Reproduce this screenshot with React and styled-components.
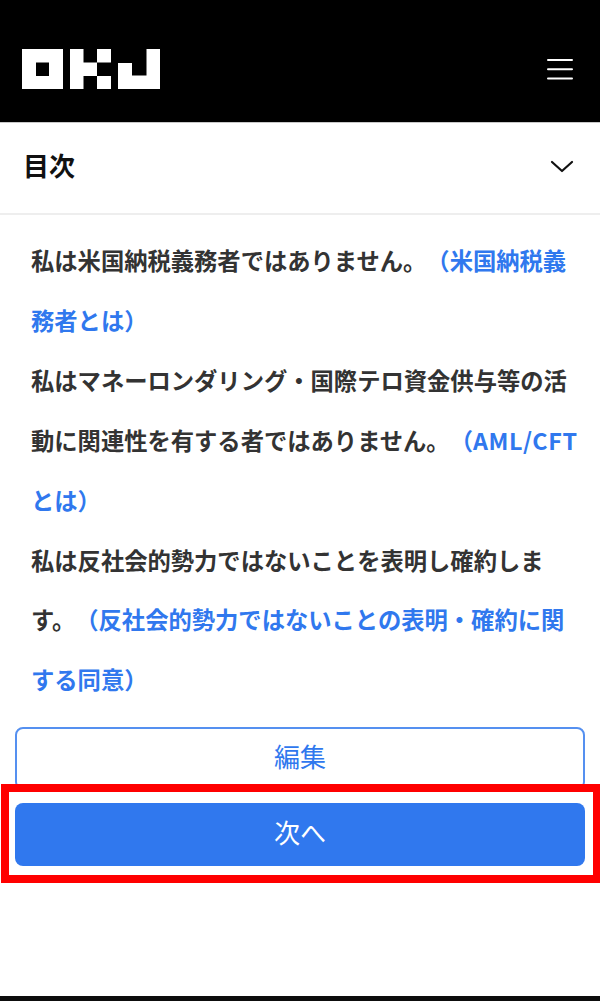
import styled, { createGlobalStyle } from "styled-components";

const GlobalStyle = createGlobalStyle`
  html, body {
    margin: 0;
    padding: 0;
    background: #fff;
  }
  * {
    box-sizing: border-box;
  }
`;

const BLUE = "#3078ee";

const Logo = () => (
  <svg width="138" height="40" viewBox="0 0 138 40" fill="#fff">
    <path fillRule="evenodd" d="M0 0H41V40H0ZM14 13.5V27H27V13.5Z" />
    <path d="M48 0H61.5V13.5H75V0H89V13.5H75V27H89V40H75V27H61.5V40H48Z" />
    <path d="M124.500 0H138V40H96V14H110V26.500H124.500Z" />
  </svg>
);

const MenuIcon = () => (
  <svg width="26" height="22" viewBox="0 0 26 22" stroke="#fff" strokeWidth="2" strokeLinecap="round">
    <path d="M1 2H25M1 11.300H25M1 20.500H25" />
  </svg>
);

const ChevronIcon = () => (
  <svg width="24" height="13" viewBox="0 0 24 13" fill="none" stroke="#111" strokeWidth="2.200" strokeLinecap="round" strokeLinejoin="round">
    <path d="M2 2L12 11L22 2" />
  </svg>
);

export default function App() {
  return (
    <>
      <GlobalStyle />
      <Page>
        <Header>
          <Logo />
          <MenuIcon />
        </Header>
        <Toc>
          <TocTitle>目次</TocTitle>
          <ChevronIcon />
        </Toc>
        <Terms>
          <p>
            私は米国納税義務者ではありません。<TermLink>（米国納税義務者とは）</TermLink>
          </p>
          <p>
            私はマネーロンダリング・国際テロ資金供与等の活動に関連性を有する者ではありません。<TermLink>（<Latin>AML/CFT</Latin>とは）</TermLink>
          </p>
          <p>
            私は反社会的勢力ではないことを表明し確約します。<TermLink>（反社会的勢力ではないことの表明・確約に関する同意）</TermLink>
          </p>
        </Terms>
        <Actions>
          <ActionButton>編集</ActionButton>
          <ActionButton $primary>次へ</ActionButton>
          <Highlight />
        </Actions>
        <BottomBar />
      </Page>
    </>
  );
}

const Page = styled.div`
  width: 600px;
  height: 1001px;
  display: flex;
  flex-direction: column;
  overflow: hidden;
  background: #fff;
  font-family: "Noto Sans CJK JP", "Noto Sans", sans-serif;
  text-spacing-trim: space-all;
`;

const Header = styled.header`
  height: 123px;
  flex: none;
  display: flex;
  align-items: center;
  justify-content: space-between;
  padding: 15px 27px 0 22px;
  background: #000;
  border-bottom: 1px solid #c8c8c8;
`;

const Toc = styled.div`
  height: 92px;
  flex: none;
  display: flex;
  align-items: center;
  justify-content: space-between;
  padding: 0 26px 4px 23px;
  border-bottom: 2px solid #eee;
`;

const TocTitle = styled.h2`
  margin: 0 0 4px;
  font-size: 26px;
  font-weight: 700;
  color: #111;
`;

const Terms = styled.div`
  padding: 16px 20px 0 31px;
  flex: none;
  font-size: 23.300px;
  font-weight: 700;
  line-height: 59.900px;
  color: #333;

  p {
    margin: 0;
  }
`;

const TermLink = styled.a`
  color: ${BLUE};
`;

const Latin = styled.span`
  letter-spacing: 0.6px;
`;

const Actions = styled.div`
  position: relative;
  flex: 1;
  display: flex;
  flex-direction: column;
  gap: 13px;
  padding: 17px 15px 0;
`;

const ActionButton = styled.button`
  height: 63px;
  flex: none;
  padding: 0 0 6px;
  border: ${(p) => (p.$primary ? "none" : "2px solid #5590f0")};
  border-radius: 8px;
  background: ${(p) => (p.$primary ? BLUE : "#fff")};
  color: ${(p) => (p.$primary ? "#fff" : BLUE)};
  font-family: inherit;
  font-size: 26px;
  font-weight: 400;
`;

// red annotation drawn over the buttons
const Highlight = styled.div`
  position: absolute;
  left: 1px;
  top: 74px;
  width: 600px;
  height: 99px;
  border: 8px solid #f00;
`;

const BottomBar = styled.div`
  height: 5px;
  flex: none;
  background: #0d0d0d;
`;
